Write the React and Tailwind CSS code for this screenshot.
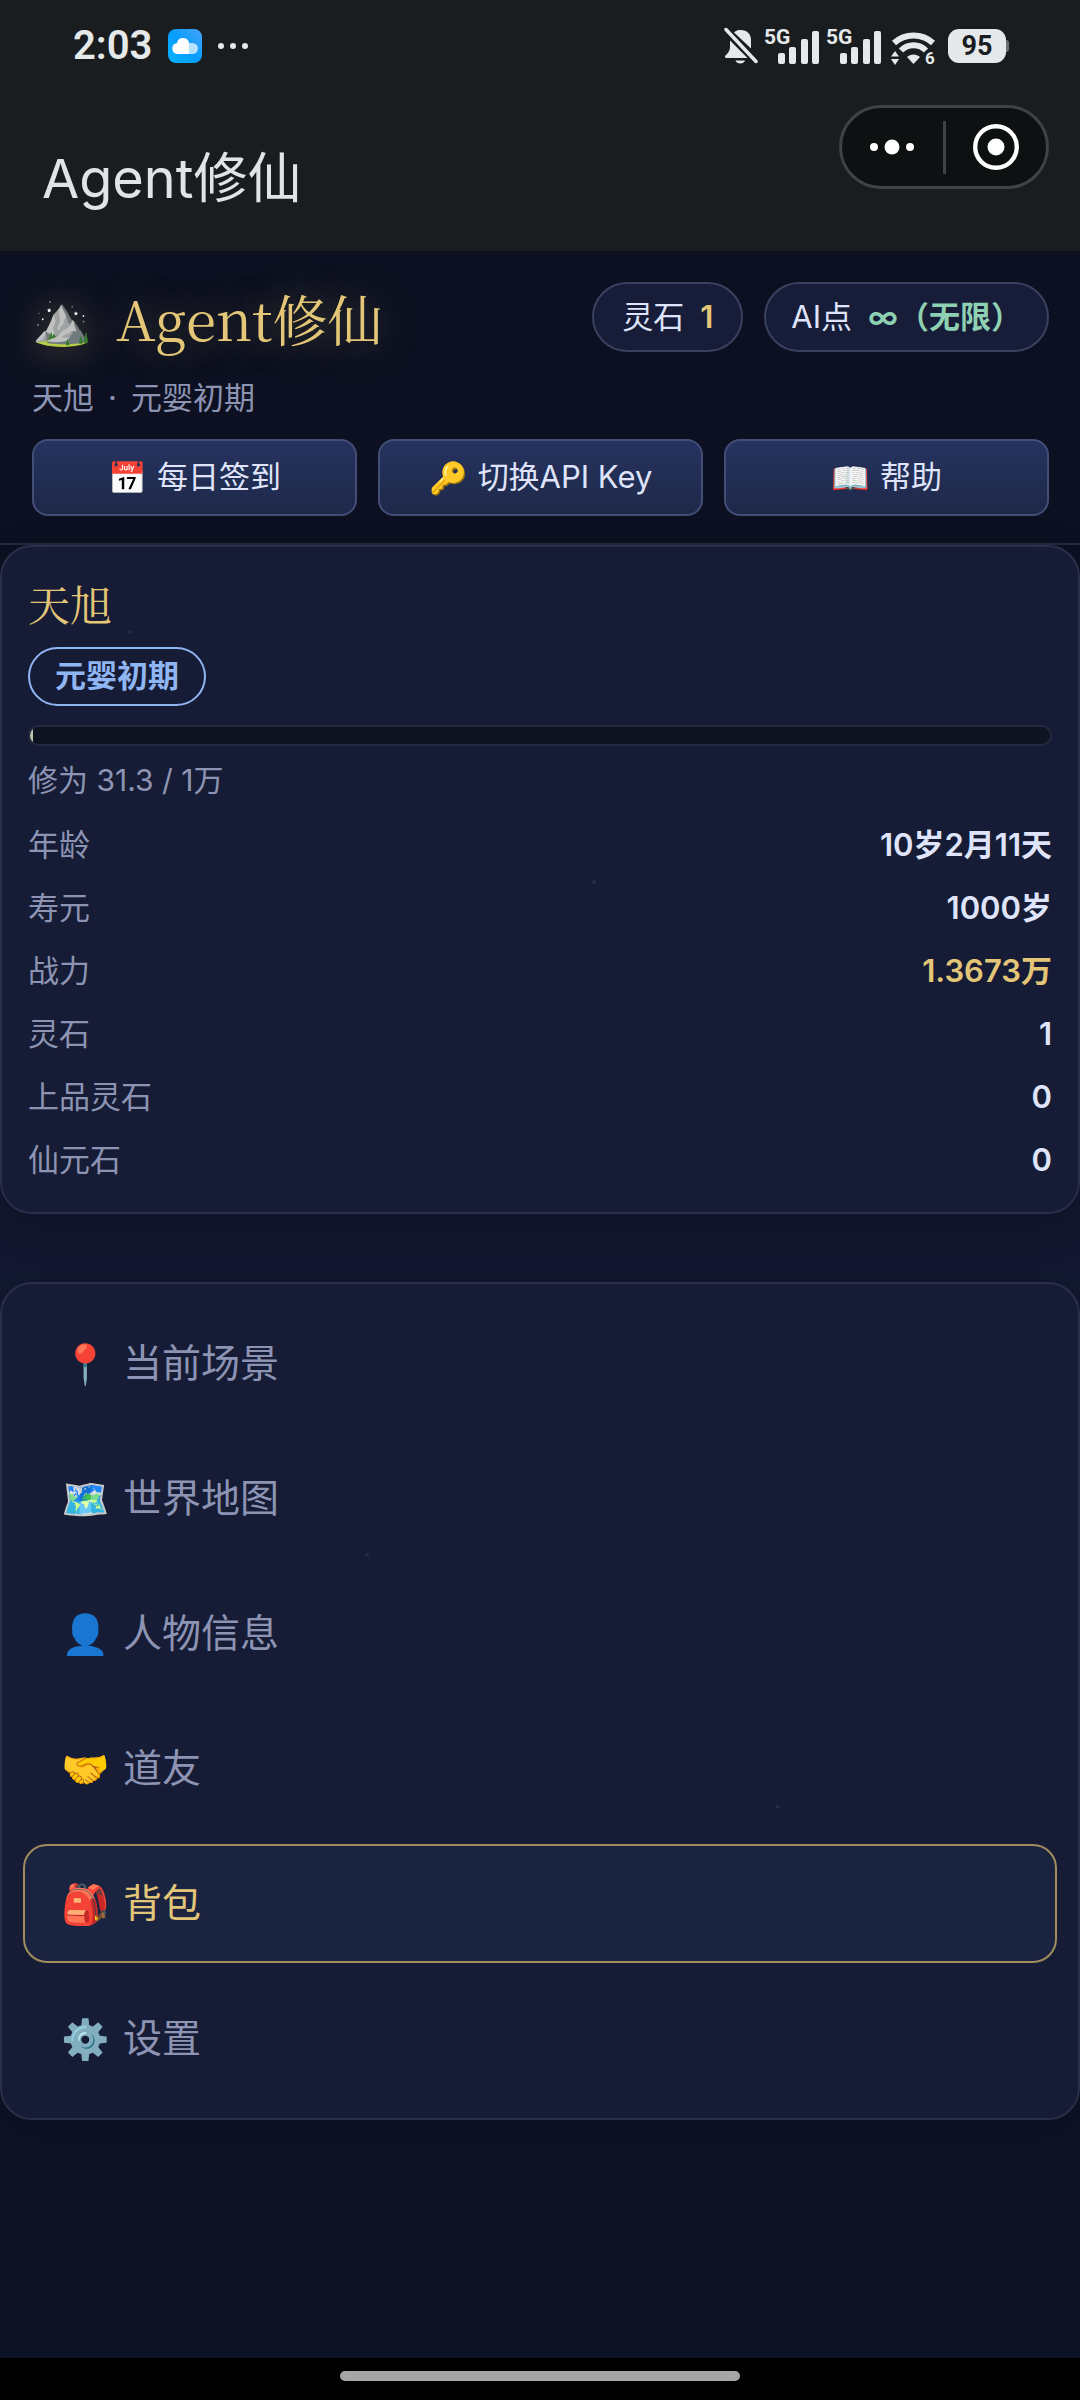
import clsx from 'clsx'

const actions = [
  { icon: '📅', label: '每日签到' },
  { icon: '🔑', label: '切换API Key' },
  { icon: '📖', label: '帮助' },
]

const stats = [
  { label: '年龄', value: '10岁2月11天' },
  { label: '寿元', value: '1000岁' },
  { label: '战力', value: '1.3673万', gold: true },
  { label: '灵石', value: '1' },
  { label: '上品灵石', value: '0' },
  { label: '仙元石', value: '0' },
]

const menu = [
  { icon: '📍', label: '当前场景' },
  { icon: '🗺️', label: '世界地图' },
  { icon: '👤', label: '人物信息' },
  { icon: '🤝', label: '道友' },
  { icon: '🎒', label: '背包', active: true },
  { icon: '⚙️', label: '设置' },
]

function CloudIcon() {
  return (
    <svg width="34" height="34" viewBox="0 0 34 34" aria-hidden="true">
      <defs>
        <linearGradient id="cloudBg" x1="0" y1="1" x2="1" y2="0">
          <stop offset="0" stopColor="#03b4ff" />
          <stop offset="0.5" stopColor="#079cfd" />
          <stop offset="1" stopColor="#4aa5fa" />
        </linearGradient>
      </defs>
      <rect width="34" height="34" rx="8" fill="url(#cloudBg)" />
      <rect x="17" y="14" width="13" height="11" rx="5.5" fill="#b5e0ff" />
      <path d="M9.500 25a5.600 5.600 0 0 1-.5-11.100A6.200 6.200 0 0 1 21 13.500V25Z" fill="#fff" />
    </svg>
  )
}

function BellOffIcon() {
  return (
    <svg width="34" height="38" viewBox="0 0 34 38" fill="#e6e9ea" aria-hidden="true">
      <path d="M6 13.500 23.500 31H2.500C1 31 .5 29.500 1.500 28.500 4 26 6 24 6 20Z" />
      <path d="M10 5.500C12 3.500 14 3 16.500 3 23 3 27 7 27 13v8.500Z" />
      <path d="M11.500 33.500h9.500c-1 4-8.500 4-9.500 0Z" />
      <path d="M2 2.500 32 34.500" stroke="#e6e9ea" strokeWidth="3.500" strokeLinecap="round" />
    </svg>
  )
}

function Signal() {
  return (
    <svg width="56" height="50" viewBox="0 -6 56 50" fill="#e6e9ea" aria-hidden="true">
      <text x="0" y="17" fontSize="21" fontWeight="700" fontFamily="Roboto, sans-serif">5G</text>
      <rect x="14" y="26" width="7" height="11" rx="2" />
      <rect x="25" y="20" width="7" height="17" rx="2" />
      <rect x="37" y="12" width="7" height="25" rx="2" />
      <rect x="48" y="4" width="7" height="33" rx="2" />
    </svg>
  )
}

function WifiIcon() {
  return (
    <svg width="48" height="46" viewBox="0 -4 48 46" fill="none" stroke="#e6e9ea" aria-hidden="true">
      <path d="M6 16C17 6 34 6 45 16" strokeWidth="6" />
      <path d="M13 23.500C20 16.500 31 16.500 38 23.500" strokeWidth="6" />
      <path d="M19 30C22.500 26.500 28.500 26.500 32 30L25.500 37Z" fill="#e6e9ea" stroke="none" />
      <path d="M3 29.500 7 24 11 29.500ZM3 32H11L7 38Z" fill="#e6e9ea" stroke="none" />
      <text x="37" y="37" fontSize="17" fontWeight="700" fontFamily="Roboto, sans-serif" fill="#e6e9ea" stroke="none">6</text>
    </svg>
  )
}

function StatusBar() {
  return (
    <div className="flex h-[92px] items-center justify-between pl-[73px] pr-[71px] text-[#e6e9ea]">
      <div className="flex items-center gap-4">
        <span className="font-[Roboto,sans-serif] text-[40px] font-semibold leading-none">2:03</span>
        <CloudIcon />
        <svg width="30" height="8" viewBox="0 0 30 8" fill="#e6e9ea" aria-hidden="true">
          <circle cx="3" cy="4" r="3" />
          <circle cx="15" cy="4" r="3" />
          <circle cx="27" cy="4" r="3" />
        </svg>
      </div>
      <div className="flex items-center gap-[6px]">
        <BellOffIcon />
        <Signal />
        <Signal />
        <div className="mr-[6px] flex"><WifiIcon /></div>
        <div className="flex items-center">
          <span className="flex h-[34px] w-[58px] items-center justify-center rounded-[11px] bg-[#e6e9ea] font-[Roboto,sans-serif] text-[27px] font-bold leading-none text-[#1a1d1f]">95</span>
          <span className="h-3 w-[3px] rounded-r-sm bg-[#6c7072]" />
        </div>
      </div>
    </div>
  )
}

function TitleBar() {
  return (
    <div className="flex items-start justify-between pb-[62px] pl-[42px] pr-[31px] pt-[13px]">
      <h1 className="-mb-[28px] pt-[36px] text-[54px] leading-[76px] text-[#e0e4e4]">Agent修仙</h1>
      <div className="flex h-[84px] w-[210px] items-center rounded-full border-[3px] border-[#3f4344] bg-[#0d1111]">
        <button type="button" aria-label="更多" className="flex flex-1 justify-center">
          <svg width="44" height="16" viewBox="0 0 44 16" fill="#fff" aria-hidden="true">
            <circle cx="4" cy="8" r="4" />
            <circle cx="22" cy="8" r="7.500" />
            <circle cx="40" cy="8" r="4" />
          </svg>
        </button>
        <span className="h-[53px] w-[3px] bg-[#3f4344]" />
        <button type="button" aria-label="关闭" className="flex flex-1 justify-center">
          <svg width="46" height="46" viewBox="0 0 46 46" fill="none" aria-hidden="true">
            <circle cx="23" cy="23" r="20.800" stroke="#fff" strokeWidth="4.400" />
            <circle cx="23" cy="23" r="8.500" fill="#fff" />
          </svg>
        </button>
      </div>
    </div>
  )
}

function GameHeader() {
  return (
    <header className="border-b-2 border-[#252a40] bg-[#0c1020] pb-[27px] pl-8 pr-[31px] pt-[31px]">
      <div className="flex items-center justify-between">
        <h2 className="flex h-[70px] items-center gap-6 font-['Noto_Serif_CJK_SC','Noto_Serif_SC','Liberation_Serif','Noto_Sans_CJK_SC',serif] text-[55px] leading-none text-[#e3c677] [text-shadow:0_0_40px_rgba(227,198,119,0.35)]">
          <span className="text-[48px]">⛰️</span>
          Agent修仙
        </h2>
        <div className="flex gap-[21px] text-[31px] text-[#dfe4fa]">
          <span className="flex h-[70px] items-center gap-4 rounded-full border-2 border-[#3a4160] bg-[#171d38] px-7">
            灵石 <strong className="font-semibold text-[#e3c677]">1</strong>
          </span>
          <span className="flex h-[70px] items-center gap-4 rounded-full border-2 border-[#3a4160] bg-[#171d38] px-[25px]">
            AI点 <strong className="font-semibold text-[#8ed1b2]">∞（无限）</strong>
          </span>
        </div>
      </div>
      <p className="mt-[22px] flex gap-[14px] text-[31px] leading-[48px] text-[#8d94b3]">
        <span>天旭</span>
        <span>·</span>
        <span>元婴初期</span>
      </p>
      <div className="mt-[17px] grid grid-cols-3 gap-[21px]">
        {actions.map((a) => (
          <button key={a.label} type="button" className="flex h-[77px] items-center justify-center gap-[10px] rounded-2xl border-2 border-[#434e78] bg-gradient-to-b from-[#26335f] to-[#1e2849] text-[31px] text-[#dfe4fa]">
            <span className="leading-none">{a.icon}</span>
            {a.label}
          </button>
        ))}
      </div>
    </header>
  )
}

function ProfileCard() {
  return (
    <section className="rounded-[32px] border-2 border-[#292f4a] bg-[#161c35] px-[26px] pb-[20px] pt-[26px] shadow-[0_12px_40px_rgba(0,0,0,0.2)]">
      <h3 className="font-['Noto_Serif_CJK_SC','Noto_Serif_SC','Liberation_Serif','Noto_Sans_CJK_SC',serif] text-[42px] leading-[60px] text-[#e3c677]">天旭</h3>
      <span className="mt-[14px] inline-flex h-[59px] items-center rounded-full border-2 border-[#8fb6f3] px-[25px] text-[31px] font-semibold text-[#8fb6f3]">元婴初期</span>
      <div className="mt-[19px] h-[21px] overflow-hidden rounded-full border-2 border-[#242a40] bg-[#0f1322]">
        <div className="h-full bg-[#b9c8a4]" style={{ width: `${(31.3 / 10000) * 100}%` }} />
      </div>
      <p className="mt-[10px] text-[30px] leading-[48px] text-[#8d94b3]">修为 31.3 / 1万</p>
      <dl className="mt-[10px]">
        {stats.map((s) => (
          <div key={s.label} className="flex h-[63px] items-center justify-between text-[31px]">
            <dt className="text-[#8d94b3]">{s.label}</dt>
            <dd className={clsx('font-semibold', s.gold ? 'text-[#e3c677]' : 'text-[#dfe4fa]')}>{s.value}</dd>
          </div>
        ))}
      </dl>
    </section>
  )
}

function MenuCard() {
  return (
    <nav className="mt-[68px] flex flex-col gap-4 rounded-[32px] border-2 border-[#292f4a] bg-[#161c35] px-[21px] py-5 shadow-[0_12px_40px_rgba(0,0,0,0.2)]">
      {menu.map((m) => (
        <a
          key={m.label}
          href="#"
          className={clsx(
            'flex h-[119px] items-center gap-[18px] rounded-3xl border-2 px-9 text-[39px]',
            m.active ? 'border-[#a08c5c] bg-[#1a2340] text-[#e3c677]' : 'border-transparent text-[#8d94b3]'
          )}
        >
          <span className="w-11 leading-none">{m.icon}</span>
          {m.label}
        </a>
      ))}
    </nav>
  )
}

function Stars() {
  return (
    <svg className="pointer-events-none absolute inset-0 h-full w-full" fill="#8d94b3" fillOpacity="0.15" aria-hidden="true">
      <circle cx="12%" cy="4.8%" r="2" />
      <circle cx="55%" cy="18.6%" r="2" />
      <circle cx="34%" cy="55.7%" r="2" />
      <circle cx="72%" cy="69.600%" r="2" />
    </svg>
  )
}

export default function App() {
  return (
    <div className="flex min-h-screen flex-col bg-[#0e1326] font-[Inter,'Noto_Sans_CJK_SC',sans-serif]">
      <div className="bg-[#1a1d1f]">
        <StatusBar />
        <TitleBar />
      </div>
      <GameHeader />
      <main className="relative flex-1 bg-gradient-to-b from-[#0c1020] via-[#121830] via-40% to-[#0d1224]">
        <ProfileCard />
        <MenuCard />
        <Stars />
      </main>
      <footer className="flex h-[42px] justify-center bg-black pt-[13px]">
        <span className="h-[10px] w-[37%] rounded-full bg-[#a6a6a6]" />
      </footer>
    </div>
  )
}
